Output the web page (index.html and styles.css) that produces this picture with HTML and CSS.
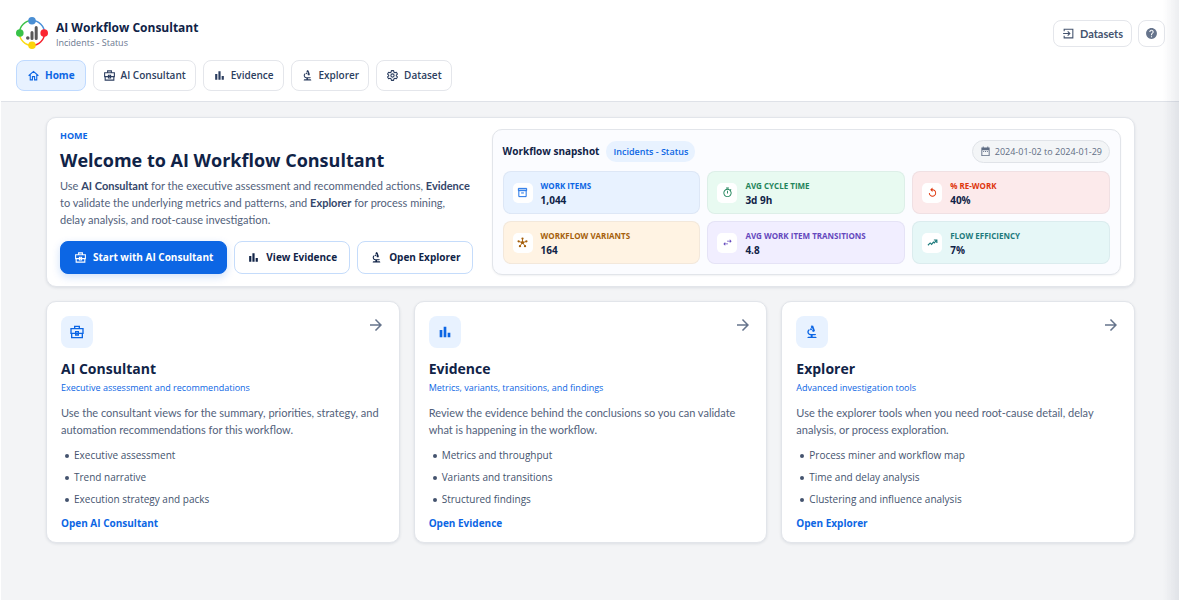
FILE: index.html
```html
<!DOCTYPE html>
<html lang="en">
<head>
    <meta charset="UTF-8">
    <meta name="viewport" content="width=device-width, initial-scale=1.0">
    <title>AI Workflow Consultant</title>
    <link rel="stylesheet" href="styles.css">
</head>
<body>
    <!-- Icon sprite -->
    <svg class="sprite" aria-hidden="true">
        <symbol id="i-home" viewBox="0 0 24 24"><path d="M3 12.500l9-8 9 8M6 10v10h4v-6h4v6h4V10" fill="none" stroke="currentColor" stroke-width="2"/></symbol>
        <symbol id="i-case" viewBox="0 0 24 24"><g fill="none" stroke="currentColor" stroke-width="2"><path d="M8.500 7V3.500h7V7M3 7h18v7H3zM4 14v6.500h16V14"/><path d="M10 11.500h4v5h-4z"/></g></symbol>
        <symbol id="i-chart" viewBox="0 0 24 24"><path d="M4 9h4v11H4zm12 4h4v7h-4zm-6-9h4v16h-4z"/></symbol>
        <symbol id="i-micro" viewBox="0 0 24 24"><path fill-rule="evenodd" d="M7 19c-1.100 0-2 .9-2 2h14c0-1.100-.9-2-2-2h-4v-2h3c1.100 0 2-.9 2-2h-8c-1.660 0-3-1.340-3-3 0-1.090.59-2.040 1.460-2.560C8.170 9.030 8 8.540 8 8c0-.21.04-.42.09-.62C6.280 8.130 5 9.920 5 12c0 2.760 2.240 5 5 5v2zM10.560 5.510C11.910 5.540 13 6.640 13 8c0 .75-.33 1.410-.85 1.870l.59 1.620.94-.34.34.94 1.880-.68-.34-.94.94-.34L13.760 2.600l-.94.34L12.480 2l-1.880.68.34.94-.94.35z"/><circle cx="10.500" cy="8" r="1.500"/></symbol>
        <symbol id="i-gear" viewBox="0 0 24 24"><g fill="none" stroke="currentColor" stroke-width="2" stroke-linejoin="round"><path d="M10 3h4l.5 2.700 2 1.200 2.600-.9 2 3.400-2.100 1.800v1.600l2.100 1.800-2 3.400-2.600-.9-2 1.200L14 21h-4l-.5-2.700-2-1.200-2.600.9-2-3.400L5 12.800v-1.600L2.900 9.400l2-3.400 2.600.9 2-1.200z"/><circle cx="12" cy="12" r="3"/></g></symbol>
        <symbol id="i-exit" viewBox="0 0 24 24"><path d="M4 8V4h16v16H4v-4M2 12h12M10.500 8l4 4-4 4" fill="none" stroke="currentColor" stroke-width="2"/></symbol>
        <symbol id="i-help" viewBox="0 0 24 24"><path d="M12 2C6.480 2 2 6.480 2 12s4.480 10 10 10 10-4.480 10-10S17.520 2 12 2zm1 17h-2v-2h2v2zm2.070-7.750l-.9.92C13.450 12.900 13 13.500 13 15h-2v-.5c0-1.100.45-2.100 1.170-2.830l1.240-1.260c.37-.36.59-.86.59-1.410 0-1.100-.9-2-2-2s-2 .9-2 2H8c0-2.210 1.790-4 4-4s4 1.790 4 4c0 .88-.36 1.680-.93 2.250z"/></symbol>
        <symbol id="i-calendar" viewBox="0 0 24 24"><path fill-rule="evenodd" d="M6 1h2v2h8V1h2v2h3v19H3V3h3zM5 9v11h14V9zM7 11h2v2H7zm4 0h2v2h-2zm4 0h2v2h-2z"/></symbol>
        <symbol id="i-archive" viewBox="0 0 24 24"><g fill="none" stroke="currentColor" stroke-width="2"><path d="M3 3h18v5H3zM4 8v13h16V8M9 13h6"/></g><path opacity=".35" d="M4 4h16v4H4z"/></symbol>
        <symbol id="i-timer" viewBox="0 0 24 24"><path d="M15 1H9v2h6V1zm-4 13h2V8h-2v6zm8.030-6.610l1.420-1.420c-.43-.51-.9-.99-1.410-1.410l-1.420 1.420C16.070 4.740 14.120 4 12 4c-4.970 0-9 4.030-9 9s4.020 9 9 9 9-4.030 9-9c0-2.120-.74-4.070-1.970-5.610zM12 20c-3.870 0-7-3.130-7-7s3.130-7 7-7 7 3.130 7 7-3.130 7-7 7z"/></symbol>
        <symbol id="i-replay" viewBox="0 0 24 24"><path d="M12 5V1L7 6l5 5V7c3.310 0 6 2.690 6 6s-2.690 6-6 6-6-2.690-6-6H4c0 4.420 3.580 8 8 8s8-3.580 8-8-3.580-8-8-8z"/></symbol>
        <symbol id="i-hub" viewBox="0 0 24 24"><path d="M12 12V4M12 12l-8-2M12 12l8-2M12 12l-5 7M12 12l5 7" stroke="currentColor" stroke-width="2"/><circle cx="12" cy="12" r="3.500"/><circle cx="12" cy="3.500" r="2.500"/><circle cx="3.500" cy="9.500" r="2.500"/><circle cx="20.500" cy="9.500" r="2.500"/><circle cx="6.500" cy="20" r="2.500"/><circle cx="17.500" cy="20" r="2.500"/></symbol>
        <symbol id="i-swap" viewBox="0 0 24 24"><path d="M7 11l-4 4 4 4v-3h6v-2H7zM21 9l-4-4v3h-6v2h6v3z"/></symbol>
        <symbol id="i-trend" viewBox="0 0 24 24"><path d="M2 18l5-5 3 3 4-5 2 2 5-6M15 6.500h6.500V13" fill="none" stroke="currentColor" stroke-width="2.500"/></symbol>
        <symbol id="i-arrow" viewBox="0 0 24 24"><path d="M12 4l-1.410 1.410L16.170 11H4v2h12.170l-5.580 5.590L12 20l8-8z"/></symbol>
    </svg>

    <header class="topbar">
        <div class="topbar-row">
            <div class="brand">
                <svg class="logo" viewBox="0 0 32 32" aria-hidden="true">
                    <g fill="none" stroke-width="1.500">
                        <path d="M16 3.500A12.500 12.500 0 0 1 28.500 16" stroke="#4a90d9"/>
                        <path d="M28.500 16A12.500 12.500 0 0 1 16 28.500" stroke="#f5222d"/>
                        <path d="M16 28.500A12.500 12.500 0 0 1 3.500 16" stroke="#fadb14"/>
                        <path d="M3.500 16A12.500 12.500 0 0 1 16 3.500" stroke="#3cc24a"/>
                    </g>
                    <circle cx="16" cy="3.800" r="3.800" fill="#4a8fd4"/>
                    <circle cx="28.200" cy="16" r="3.800" fill="#fb2530"/>
                    <circle cx="16" cy="28.200" r="3.800" fill="#fcd40a"/>
                    <circle cx="3.800" cy="16" r="3.800" fill="#38c248"/>
                    <path d="M16 15.500v6M20.200 10.500v11" stroke="#595959" stroke-width="3" stroke-linecap="round"/>
                    <circle cx="11.800" cy="21" r="1.800" fill="#595959"/>
                </svg>
                <div>
                    <div class="brand-name">AI Workflow Consultant</div>
                    <div class="brand-sub">Incidents - Status</div>
                </div>
            </div>
            <div class="top-actions">
                <button class="btn-top"><svg class="icon"><use href="#i-exit"/></svg>Datasets</button>
                <button class="btn-top btn-help" aria-label="Help"><svg class="icon"><use href="#i-help"/></svg></button>
            </div>
        </div>
        <nav class="tabs">
            <a href="#" class="tab active"><svg class="icon"><use href="#i-home"/></svg>Home</a>
            <a href="#" class="tab"><svg class="icon"><use href="#i-case"/></svg>AI Consultant</a>
            <a href="#" class="tab"><svg class="icon"><use href="#i-chart"/></svg>Evidence</a>
            <a href="#" class="tab"><svg class="icon"><use href="#i-micro"/></svg>Explorer</a>
            <a href="#" class="tab"><svg class="icon"><use href="#i-gear"/></svg>Dataset</a>
        </nav>
    </header>

    <main class="page">
        <section class="hero">
            <div class="intro">
                <div class="eyebrow">HOME</div>
                <h1>Welcome to AI Workflow Consultant</h1>
                <p>Use <strong>AI Consultant</strong> for the executive assessment and recommended actions, <strong>Evidence</strong> to validate the underlying metrics and patterns, and <strong>Explorer</strong> for process mining, delay analysis, and root-cause investigation.</p>
                <div class="hero-actions">
                    <button class="btn primary"><svg class="icon"><use href="#i-case"/></svg>Start with AI Consultant</button>
                    <button class="btn"><svg class="icon"><use href="#i-chart"/></svg>View Evidence</button>
                    <button class="btn"><svg class="icon"><use href="#i-micro"/></svg>Open Explorer</button>
                </div>
            </div>

            <div class="snapshot">
                <div class="snapshot-head">
                    <h2>Workflow snapshot</h2>
                    <span class="chip">Incidents - Status</span>
                    <span class="date-chip"><svg class="icon"><use href="#i-calendar"/></svg>2024-01-02 to 2024-01-29</span>
                </div>
                <div class="kpis">
                    <div class="kpi blue">
                        <span class="kpi-icon"><svg class="icon"><use href="#i-archive"/></svg></span>
                        <div><div class="kpi-label">WORK ITEMS</div><div class="kpi-value">1,044</div></div>
                    </div>
                    <div class="kpi green">
                        <span class="kpi-icon"><svg class="icon"><use href="#i-timer"/></svg></span>
                        <div><div class="kpi-label">AVG CYCLE TIME</div><div class="kpi-value">3d 9h</div></div>
                    </div>
                    <div class="kpi red">
                        <span class="kpi-icon"><svg class="icon"><use href="#i-replay"/></svg></span>
                        <div><div class="kpi-label">% RE-WORK</div><div class="kpi-value">40%</div></div>
                    </div>
                    <div class="kpi orange">
                        <span class="kpi-icon"><svg class="icon"><use href="#i-hub"/></svg></span>
                        <div><div class="kpi-label">WORKFLOW VARIANTS</div><div class="kpi-value">164</div></div>
                    </div>
                    <div class="kpi purple">
                        <span class="kpi-icon"><svg class="icon"><use href="#i-swap"/></svg></span>
                        <div><div class="kpi-label">AVG WORK ITEM TRANSITIONS</div><div class="kpi-value">4.8</div></div>
                    </div>
                    <div class="kpi teal">
                        <span class="kpi-icon"><svg class="icon"><use href="#i-trend"/></svg></span>
                        <div><div class="kpi-label">FLOW EFFICIENCY</div><div class="kpi-value">7%</div></div>
                    </div>
                </div>
            </div>
        </section>

        <section class="cards">
            <article class="card">
                <div class="card-head">
                    <span class="card-icon"><svg class="icon"><use href="#i-case"/></svg></span>
                    <svg class="icon arrow"><use href="#i-arrow"/></svg>
                </div>
                <h3>AI Consultant</h3>
                <div class="card-sub">Executive assessment and recommendations</div>
                <p>Use the consultant views for the summary, priorities, strategy, and automation recommendations for this workflow.</p>
                <ul>
                    <li>Executive assessment</li>
                    <li>Trend narrative</li>
                    <li>Execution strategy and packs</li>
                </ul>
                <a href="#" class="card-link">Open AI Consultant</a>
            </article>
            <article class="card">
                <div class="card-head">
                    <span class="card-icon"><svg class="icon"><use href="#i-chart"/></svg></span>
                    <svg class="icon arrow"><use href="#i-arrow"/></svg>
                </div>
                <h3>Evidence</h3>
                <div class="card-sub">Metrics, variants, transitions, and findings</div>
                <p>Review the evidence behind the conclusions so you can validate what is happening in the workflow.</p>
                <ul>
                    <li>Metrics and throughput</li>
                    <li>Variants and transitions</li>
                    <li>Structured findings</li>
                </ul>
                <a href="#" class="card-link">Open Evidence</a>
            </article>
            <article class="card">
                <div class="card-head">
                    <span class="card-icon"><svg class="icon"><use href="#i-micro"/></svg></span>
                    <svg class="icon arrow"><use href="#i-arrow"/></svg>
                </div>
                <h3>Explorer</h3>
                <div class="card-sub">Advanced investigation tools</div>
                <p>Use the explorer tools when you need root-cause detail, delay analysis, or process exploration.</p>
                <ul>
                    <li>Process miner and workflow map</li>
                    <li>Time and delay analysis</li>
                    <li>Clustering and influence analysis</li>
                </ul>
                <a href="#" class="card-link">Open Explorer</a>
            </article>
        </section>
    </main>
</body>
</html>
```
FILE: styles.css
```css
* {
    box-sizing: border-box;
}
body {
    margin: 0;
    min-height: 100vh;
    border-left: 1px solid #fff;
    background: #f3f4f6;
    color: #102347;
    font-family: "Segoe UI", "Open Sans", "Noto Sans", sans-serif;
    font-size: 10px;
    line-height: 17px;
}
/* shadow of the closed side panel */
body::after {
    content: "";
    position: fixed;
    top: 0;
    right: 0;
    bottom: 0;
    width: 16px;
    background: linear-gradient(to right, rgba(16, 35, 71, 0), rgba(16, 35, 71, 0.08));
    pointer-events: none;
}
h1, h2, h3, p, ul {
    margin: 0;
}
button {
    font: inherit;
    cursor: pointer;
}
a {
    text-decoration: none;
}
.sprite {
    display: none;
}
.icon {
    width: 13px;
    height: 13px;
    fill: currentColor;
    flex: none;
}

/* header */
.topbar {
    padding: 17px 14px 10px 15px;
    background: #fff;
    border-bottom: 1px solid #dfe2e8;
}
.topbar-row {
    display: flex;
    justify-content: space-between;
    align-items: center;
}
.brand {
    display: flex;
    align-items: center;
    gap: 8px;
}
.logo {
    width: 32px;
    height: 32px;
}
.brand-name {
    font-size: 12px;
    font-weight: 700;
    line-height: 19px;
}
.brand-sub {
    font-size: 9px;
    line-height: 12px;
    color: #6b7890;
}
.top-actions {
    display: flex;
    gap: 6px;
}
.btn-top {
    display: flex;
    align-items: center;
    gap: 5px;
    height: 27px;
    padding: 0 8px;
    border: 1px solid #e4e6eb;
    border-radius: 8px;
    background: #fff;
    color: #44536e;
    font-family: Lato, sans-serif;
    font-size: 11px;
    font-weight: 700;
}
.btn-help {
    width: 27px;
    padding: 0;
    justify-content: center;
    color: #66748c;
}
.tabs {
    display: flex;
    gap: 7px;
    margin-top: 11px;
}
.tab {
    display: flex;
    align-items: center;
    gap: 5px;
    height: 31px;
    padding: 0 9px;
    border: 1px solid #e4e6eb;
    border-radius: 8px;
    color: #2c3e60;
    font-weight: 600;
}
.tab.active {
    padding: 0 10px;
    background: #e8f2ff;
    border-color: #bfdaff;
    color: #0c66e4;
    font-weight: 700;
}

/* hero */
.page {
    padding: 15px 44px 15px 45px;
}
.hero {
    display: grid;
    grid-template-columns: minmax(0, 2fr) minmax(0, 3fr);
    gap: 12px;
    padding: 11px 13px;
    background: #fff;
    border: 1px solid #e2e5ea;
    border-radius: 10px;
    box-shadow: 0 1px 3px rgba(16, 35, 71, 0.1);
}
.eyebrow {
    color: #0c66e4;
    font-size: 9px;
    font-weight: 700;
    line-height: 14px;
}
.hero h1 {
    margin-top: 4px;
    font-size: 18px;
    line-height: 26px;
}
.intro p,
.card p {
    color: #52617b;
    font-family: "Segoe UI", Lato, sans-serif;
    font-size: 11px;
}
.intro p {
    margin-top: 4px;
    padding-right: 8px;
}
.intro strong {
    color: #34466a;
}
.hero-actions {
    display: flex;
    gap: 7px;
    margin-top: 13px;
}
.btn {
    display: flex;
    align-items: center;
    gap: 6px;
    height: 33px;
    padding: 0 12px;
    border: 1px solid #c5dcfb;
    border-radius: 8px;
    background: #fff;
    color: #102347;
    font-weight: 700;
    white-space: nowrap;
}
.btn.primary {
    padding: 0 13px;
    border-color: #0c66e4;
    background: #0c66e4;
    color: #fff;
    box-shadow: 0 3px 8px rgba(12, 102, 228, 0.2);
}

/* snapshot */
.snapshot {
    padding: 10px;
    background: #fbfcff;
    border: 1px solid #e2e5ea;
    border-radius: 10px;
    box-shadow: 0 1px 2px rgba(16, 35, 71, 0.06);
}
.snapshot-head {
    display: flex;
    align-items: center;
    gap: 7px;
    height: 23px;
    margin-bottom: 8px;
}
.snapshot h2 {
    font-size: 10px;
}
.chip {
    padding: 2px 7px;
    border-radius: 10px;
    background: #e8f2ff;
    color: #0c66e4;
    font-size: 9px;
    font-weight: 600;
}
.date-chip {
    display: flex;
    align-items: center;
    gap: 4px;
    margin-left: auto;
    padding: 2px 7px;
    border: 1px solid #e0e3e8;
    border-radius: 12px;
    background: #f3f5f7;
    color: #5f6d84;
    font-size: 9px;
}
.kpis {
    display: grid;
    grid-template-columns: repeat(3, 1fr);
    gap: 7px;
}
.kpi {
    display: flex;
    align-items: center;
    gap: 8px;
    height: 43px;
    padding: 0 9px;
    border: 1px solid rgba(16, 35, 71, 0.05);
    border-radius: 8px;
    white-space: nowrap;
}
.kpi-icon {
    display: flex;
    align-items: center;
    justify-content: center;
    width: 20px;
    height: 20px;
    border-radius: 5px;
    background: #fff;
}
.kpi-icon .icon,
.date-chip .icon {
    width: 11px;
    height: 11px;
}
.kpi-label {
    font-size: 8px;
    font-weight: 700;
    line-height: 14px;
}
.kpi-value {
    color: #102347;
    font-size: 10px;
    font-weight: 700;
    line-height: 14px;
}
.blue {
    background: #e8f2ff;
    color: #0c66e4;
}
.green {
    background: #e8faf1;
    color: #1f845a;
}
.red {
    background: #fceaeb;
    color: #de350b;
}
.orange {
    background: #fff3e3;
    color: #a55f0b;
}
.purple {
    background: #f1eeff;
    color: #6448bd;
}
.teal {
    background: #e6f7f7;
    color: #1d7a7c;
}

/* cards */
.cards {
    display: grid;
    grid-template-columns: repeat(3, 1fr);
    gap: 14px;
    margin-top: 14px;
}
.card {
    padding: 14px 14px 10px;
    background: #fff;
    border: 1px solid #e2e5ea;
    border-radius: 10px;
    box-shadow: 0 1px 3px rgba(16, 35, 71, 0.1);
}
.card-head {
    display: flex;
    justify-content: space-between;
}
.card-icon {
    display: flex;
    align-items: center;
    justify-content: center;
    width: 32px;
    height: 32px;
    border-radius: 8px;
    background: #e8f2ff;
    color: #0c66e4;
}
.card-icon .icon {
    width: 16px;
    height: 16px;
}
.card-head .arrow {
    width: 18px;
    height: 18px;
    color: #66748c;
}
.card h3 {
    margin-top: 11px;
    font-size: 14px;
    line-height: 20px;
}
.card-sub {
    color: #0c66e4;
    font-size: 9px;
}
.card p {
    margin-top: 8px;
}
.card ul {
    display: grid;
    gap: 5px;
    margin-top: 9px;
    padding-left: 4px;
    color: #44536e;
    list-style: none;
}
.card li {
    display: flex;
    align-items: center;
    gap: 5px;
}
.card li::before {
    content: "";
    width: 4px;
    height: 4px;
    border-radius: 50%;
    background: #44536e;
}
.card-link {
    display: block;
    margin-top: 7px;
    color: #0c66e4;
    font-weight: 700;
}
```
